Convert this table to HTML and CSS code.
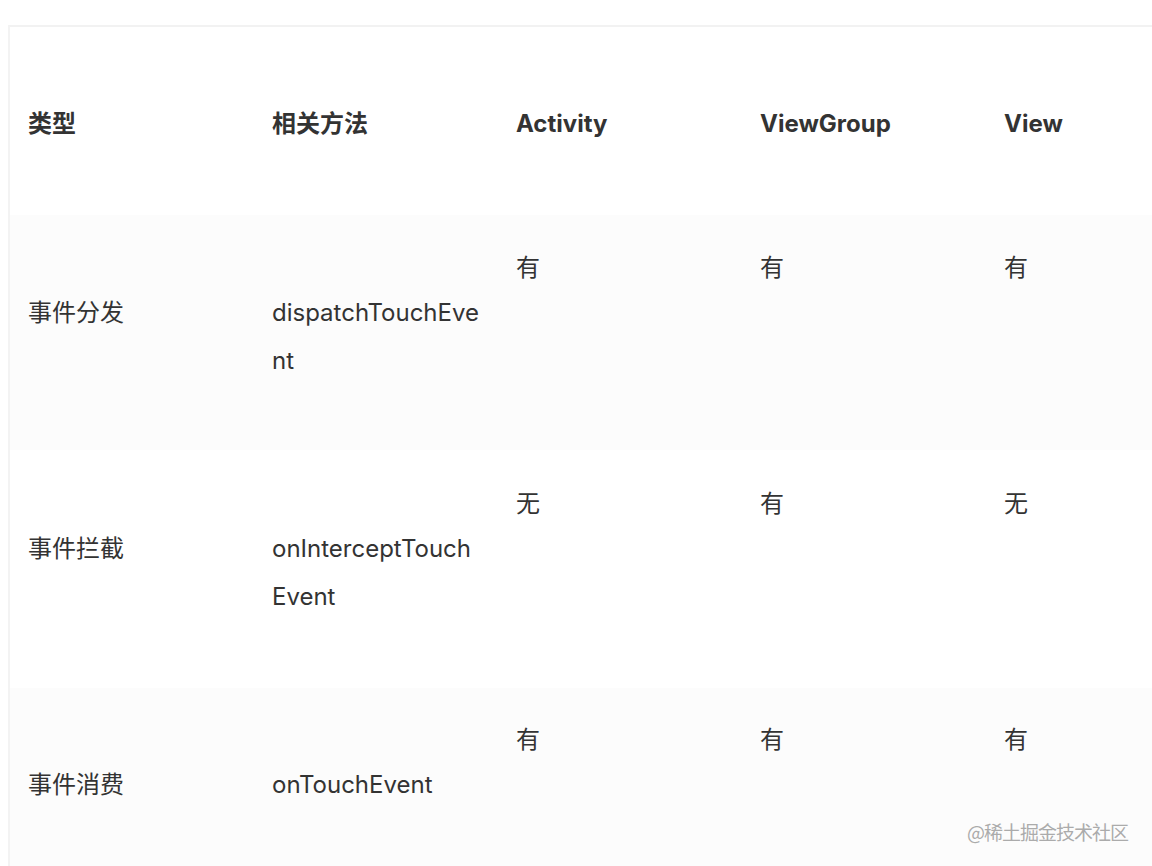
FILE: index.html
```html
<!DOCTYPE html>
<html lang="zh-CN">
<head>
<meta charset="utf-8">
<title>事件分发</title>
<link rel="stylesheet" href="styles.css">
</head>
<body>
<div class="page">
  <table class="events">
    <thead>
      <tr class="row-head">
        <th>类型</th>
        <th>相关方法</th>
        <th>Activity</th>
        <th>ViewGroup</th>
        <th>View</th>
      </tr>
    </thead>
    <tbody>
      <tr class="row-1 shaded">
        <td class="lead">事件分发</td>
        <td class="lead">dispatchTouchEvent</td>
        <td class="flag">有</td>
        <td class="flag">有</td>
        <td class="flag">有</td>
      </tr>
      <tr class="row-2">
        <td class="lead">事件拦截</td>
        <td class="lead">onInterceptTouchEvent</td>
        <td class="flag">无</td>
        <td class="flag">有</td>
        <td class="flag">无</td>
      </tr>
      <tr class="row-3 shaded">
        <td class="lead">事件消费</td>
        <td class="lead">onTouchEvent</td>
        <td class="flag">有</td>
        <td class="flag">有</td>
        <td class="flag">有</td>
      </tr>
    </tbody>
  </table>
  <div class="watermark">@稀土掘金技术社区</div>
</div>
</body>
</html>
```
FILE: styles.css
```css
html, body {
  margin: 0;
  padding: 0;
  background: #ffffff;
  overflow: hidden;
}

.page {
  position: relative;
  width: 1152px;
  height: 866px;
  overflow: hidden;
  padding-top: 25px;
  box-sizing: border-box;
}

.events {
  margin-left: 8px;
  border-collapse: separate;
  border-spacing: 0;
  table-layout: fixed;
  width: 1222px;
  border-top: 2px solid #f2f2f2;
  border-left: 2px solid #f3f3f3;
  font-family: Inter, "Noto Sans CJK SC", sans-serif;
  font-size: 24px;
  line-height: 48px;
  color: #333333;
}

.events th,
.events td {
  width: 244px;
  box-sizing: border-box;
  padding: 0 18px 0 18px;
  text-align: left;
  vertical-align: top;
  word-break: break-all;
}

.events th {
  font-weight: 700;
  padding-top: 73px;
}

.row-head { height: 188px; }
.row-1 { height: 235px; }
.row-2 { height: 238px; }
.row-3 { height: 200px; }

.shaded td {
  background: #fcfcfc;
}

.events td.lead {
  padding-top: 73px;
}

.events td.flag {
  padding-top: 28px;
}

.events .row-1 td.lead { padding-top: 74px; }
.events .row-1 td.flag { padding-top: 29px; }
.events .row-2 td.lead { padding-top: 75px; }
.events .row-2 td.flag { padding-top: 30px; }

.watermark {
  position: absolute;
  right: 24px;
  bottom: 20px;
  font-family: "Noto Sans CJK SC", sans-serif;
  font-size: 19px;
  line-height: 28px;
  color: #ababab;
  text-shadow: 0 0 2px #ffffff, 0 0 1px #ffffff;
  letter-spacing: -1px;
}
```
